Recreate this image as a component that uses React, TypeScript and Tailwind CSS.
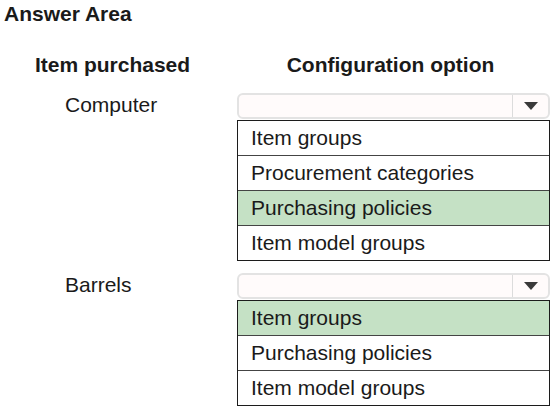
import React from "react";

type Row = { label: string; options: string[]; picked: number };

const rows: Row[] = [
  {
    label: "Computer",
    options: ["Item groups", "Procurement categories", "Purchasing policies", "Item model groups"],
    picked: 2,
  },
  {
    label: "Barrels",
    options: ["Item groups", "Purchasing policies", "Item model groups"],
    picked: 0,
  },
];

function Select() {
  return (
    <div className="flex h-[26px] w-[313px] rounded-[6px] border-2 border-[#e3e3e3] bg-[#fffbfb]">
      <div className="flex-1" />
      <div className="flex w-[36px] items-center justify-center border-l border-[#dcdcdc]">
        <svg viewBox="0 0 14 8" className="h-[8px] w-[14px]" aria-hidden="true">
          <path d="M0 0h14L7 8z" fill="#3a3a3a" />
        </svg>
      </div>
    </div>
  );
}

function OptionList({ options, picked }: { options: string[]; picked: number }) {
  return (
    <div className="mt-[1px] w-[313px] border border-[#1c1c1c]">
      {options.map((o, i) => (
        <div
          key={o}
          className={`flex items-center pl-[13px] text-[21px] leading-[24px] text-[#1a1a1a] ${
            i > 0 ? "h-[35px] border-t border-[#444]" : "h-[34px]"
          } ${i === picked ? "bg-[#c5e1c5]" : "bg-white"}`}
        >
          {o}
        </div>
      ))}
    </div>
  );
}

export default function App() {
  return (
    <div className="h-[416px] w-[558px] bg-white font-['Liberation_Sans',Arial,sans-serif] text-[#1a1a1a]">
      <div className="pl-[4px] pt-[2px] text-[21px] font-bold leading-[24px]">Answer Area</div>

      <div className="mt-[27px] flex leading-[24px]">
        <div className="w-[225px] text-center text-[21px] font-bold">Item purchased</div>
        <div className="ml-[9px] w-[313px] text-center text-[21px] font-bold">Configuration option</div>
      </div>

      <div className="mt-[16px] flex flex-col gap-[12px]">
        {rows.map((r) => (
          <div key={r.label} className="flex">
            <div className="w-[225px] pl-[65px] text-[21px] leading-[24px]">{r.label}</div>
            <div className="ml-[12px]">
              <Select />
              <OptionList options={r.options} picked={r.picked} />
            </div>
          </div>
        ))}
      </div>
    </div>
  );
}
